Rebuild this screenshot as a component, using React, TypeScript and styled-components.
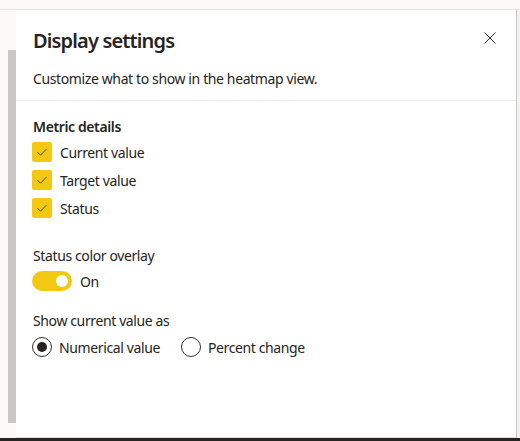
import React from "react";
import styled, { createGlobalStyle } from "styled-components";

const Global = createGlobalStyle`
  html, body { margin: 0; padding: 0; }
  body {
    background: #faf9f8;
    font-family: "Noto Sans", "Open Sans", sans-serif;
    color: #252423;
    width: 520px;
    height: 441px;
    overflow: hidden;
  }
`;

const Page = styled.div`
  width: 520px;
  height: 441px;
  display: flex;
  flex-direction: column;
`;

const TopStrip = styled.div`
  height: 9px;
  border-bottom: 1px solid #e8e6e4;
  background: #faf9f8;
  flex: none;
`;

const Middle = styled.div`
  flex: 1;
  display: flex;
  min-height: 0;
`;

const Gutter = styled.div`
  width: 16px;
  flex: none;
  padding-top: 40px;
  padding-left: 8px;
  box-sizing: border-box;
`;

const Scrollbar = styled.div`
  width: 8px;
  height: 373px;
  background: #c8c8c8;
`;

const Panel = styled.div`
  width: 500px;
  flex: none;
  background: #ffffff;
  border-bottom: 1px solid #e1dfdd;
  display: flex;
  flex-direction: column;
`;

const RightEdge = styled.div`
  flex: 1;
  border-left: 1px solid #c8c6c4;
  background: #f3f2f1;
`;

const BottomBar = styled.div`
  height: 3px;
  flex: none;
  background: #252423;
`;

const Header = styled.div`
  padding: 16px 16px 11px 17px;
  border-bottom: 1px solid #edebe9;
  position: relative;
`;

const Title = styled.h1`
  margin: 0;
  font-size: 20px;
  line-height: 30px;
  font-weight: 600;
  letter-spacing: -0.85px;
  color: #252423;
`;

const Subtitle = styled.p`
  margin: 13px 0 0;
  font-size: 14px;
  line-height: 20px;
  letter-spacing: -0.38px;
  color: #252423;
`;

const CloseButton = styled.button`
  position: absolute;
  top: 20px;
  right: 18px;
  width: 16px;
  height: 16px;
  padding: 0;
  border: none;
  background: transparent;
  display: flex;
  align-items: center;
  justify-content: center;
`;

const Body = styled.div`
  padding: 16px 16px 0 16px;
  display: flex;
  flex-direction: column;
  font-size: 14px;
  letter-spacing: -0.38px;
`;

const SectionLabel = styled.div<{ $bold?: boolean; $top?: number }>`
  font-size: 14px;
  line-height: 20px;
  font-weight: ${(p) => (p.$bold ? 600 : 400)};
  margin-top: ${(p) => p.$top ?? 0}px;
  padding-left: 1px;
`;

const CheckList = styled.div`
  margin-top: 5px;
  display: flex;
  flex-direction: column;
  gap: 8px;
`;

const CheckRow = styled.label`
  display: flex;
  align-items: center;
  gap: 8px;
  height: 20px;
`;

const Box = styled.span`
  width: 20px;
  height: 20px;
  border-radius: 2px;
  background: #f2c811;
  display: flex;
  align-items: center;
  justify-content: center;
  flex: none;
`;

const ToggleRow = styled.div`
  margin-top: 5px;
  display: flex;
  align-items: center;
  gap: 8px;
  height: 20px;
`;

const Track = styled.span`
  width: 40px;
  height: 20px;
  border-radius: 10px;
  background: #f2c811;
  display: flex;
  align-items: center;
  justify-content: flex-end;
  padding-right: 4px;
  box-sizing: border-box;
`;

const Knob = styled.span`
  width: 12px;
  height: 12px;
  border-radius: 50%;
  background: #ffffff;
`;

const RadioGroup = styled.div`
  margin-top: 6px;
  display: flex;
  align-items: center;
  gap: 21px;
`;

const RadioRow = styled.label`
  display: flex;
  align-items: center;
  gap: 7px;
  height: 20px;
`;

const RadioCircle = styled.span<{ $checked?: boolean }>`
  width: 20px;
  height: 20px;
  border-radius: 50%;
  border: 1px solid #323130;
  box-sizing: border-box;
  display: flex;
  align-items: center;
  justify-content: center;
  flex: none;
  &::after {
    content: "";
    width: 10px;
    height: 10px;
    border-radius: 50%;
    background: #252423;
    display: ${(p) => (p.$checked ? "block" : "none")};
  }
`;

const Check = () => (
  <svg width="14" height="14" viewBox="0 0 14 14" fill="none">
    <path d="M2.5 7.2 L5.5 10.2 L11.5 4" stroke="#4a4846" strokeWidth="1" />
  </svg>
);

const items = ["Current value", "Target value", "Status"];

export default function App() {
  return (
    <>
      <Global />
      <Page>
        <TopStrip />
        <Middle>
          <Gutter>
            <Scrollbar />
          </Gutter>
          <Panel>
            <Header>
              <Title>Display settings</Title>
              <Subtitle>Customize what to show in the heatmap view.</Subtitle>
              <CloseButton aria-label="Close">
                <svg width="12" height="12" viewBox="0 0 12 12">
                  <path d="M0.5 0.5 L11.5 11.5 M11.5 0.5 L0.5 11.5" stroke="#323130" strokeWidth="1" />
                </svg>
              </CloseButton>
            </Header>
            <Body>
              <SectionLabel $bold>Metric details</SectionLabel>
              <CheckList>
                {items.map((t) => (
                  <CheckRow key={t}>
                    <Box>
                      <Check />
                    </Box>
                    {t}
                  </CheckRow>
                ))}
              </CheckList>
              <SectionLabel $top={28}>Status color overlay</SectionLabel>
              <ToggleRow>
                <Track>
                  <Knob />
                </Track>
                On
              </ToggleRow>
              <SectionLabel $top={20}>Show current value as</SectionLabel>
              <RadioGroup>
                <RadioRow>
                  <RadioCircle $checked />
                  Numerical value
                </RadioRow>
                <RadioRow>
                  <RadioCircle />
                  Percent change
                </RadioRow>
              </RadioGroup>
            </Body>
          </Panel>
          <RightEdge />
        </Middle>
        <BottomBar />
      </Page>
    </>
  );
}
